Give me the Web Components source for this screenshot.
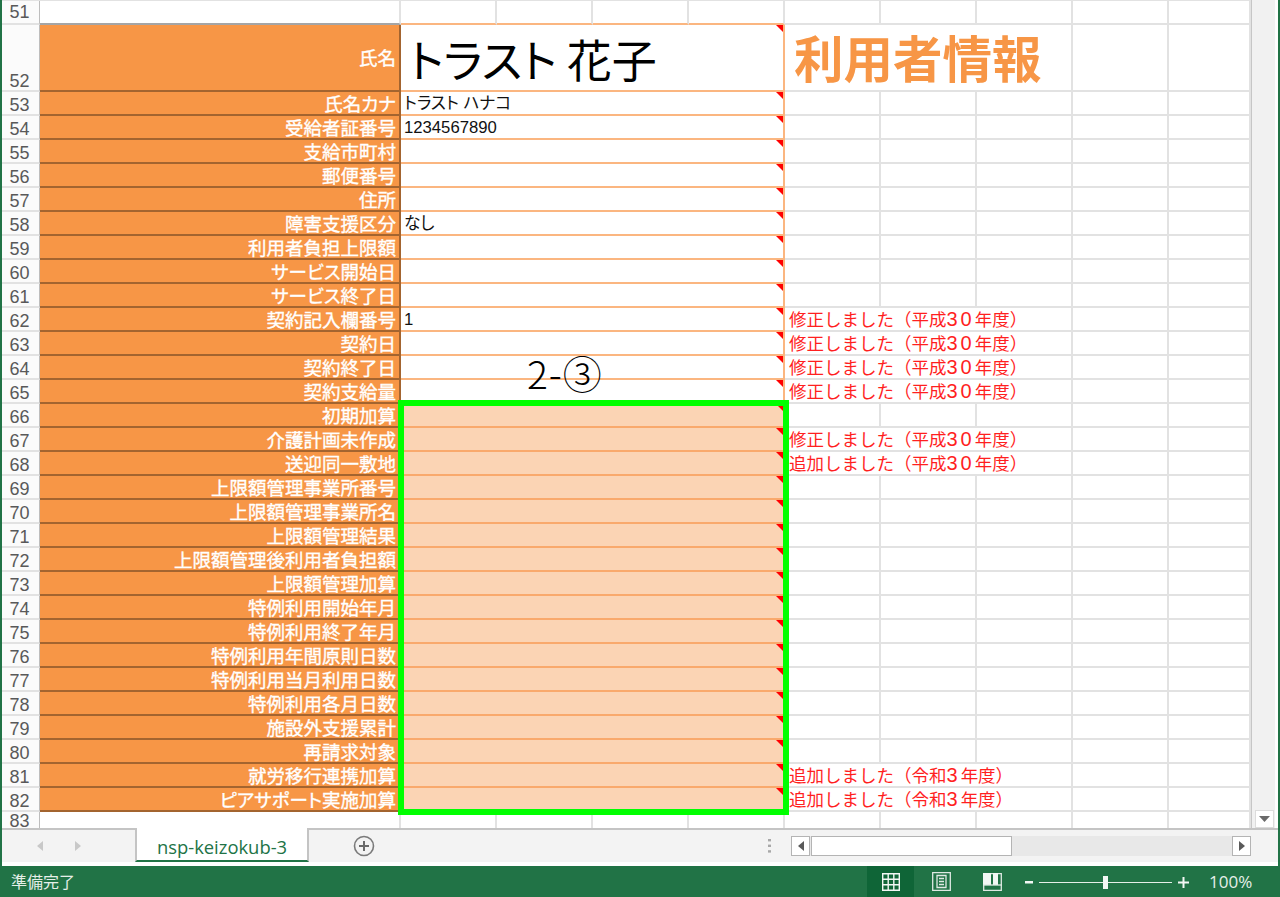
<!DOCTYPE html>
<html lang="ja">
<head>
<meta charset="utf-8">
<title>nsp-keizokub-3</title>
<style>
  html, body { margin: 0; padding: 0; height: 100%; overflow: hidden; background: #fff; }
</style>
</head>
<body>
<excel-window>
  <sheet-grid>
    <sheet-row num="51" kind="blank"></sheet-row>
    <sheet-row num="52" kind="head" label="氏名" title="利用者情報">トラスト 花子</sheet-row>
    <sheet-row num="53" label="氏名カナ">トラスト ハナコ</sheet-row>
    <sheet-row num="54" label="受給者証番号">1234567890</sheet-row>
    <sheet-row num="55" label="支給市町村"></sheet-row>
    <sheet-row num="56" label="郵便番号"></sheet-row>
    <sheet-row num="57" label="住所"></sheet-row>
    <sheet-row num="58" label="障害支援区分">なし</sheet-row>
    <sheet-row num="59" label="利用者負担上限額"></sheet-row>
    <sheet-row num="60" label="サービス開始日"></sheet-row>
    <sheet-row num="61" label="サービス終了日"></sheet-row>
    <sheet-row num="62" label="契約記入欄番号" note="修正しました（平成30年度）">1</sheet-row>
    <sheet-row num="63" label="契約日" note="修正しました（平成30年度）"></sheet-row>
    <sheet-row num="64" label="契約終了日" note="修正しました（平成30年度）"></sheet-row>
    <sheet-row num="65" label="契約支給量" note="修正しました（平成30年度）"></sheet-row>
    <sheet-row num="66" kind="fill" label="初期加算"></sheet-row>
    <sheet-row num="67" kind="fill" label="介護計画未作成" note="修正しました（平成30年度）"></sheet-row>
    <sheet-row num="68" kind="fill" label="送迎同一敷地" note="追加しました（平成30年度）"></sheet-row>
    <sheet-row num="69" kind="fill" label="上限額管理事業所番号"></sheet-row>
    <sheet-row num="70" kind="fill" label="上限額管理事業所名"></sheet-row>
    <sheet-row num="71" kind="fill" label="上限額管理結果"></sheet-row>
    <sheet-row num="72" kind="fill" label="上限額管理後利用者負担額"></sheet-row>
    <sheet-row num="73" kind="fill" label="上限額管理加算"></sheet-row>
    <sheet-row num="74" kind="fill" label="特例利用開始年月"></sheet-row>
    <sheet-row num="75" kind="fill" label="特例利用終了年月"></sheet-row>
    <sheet-row num="76" kind="fill" label="特例利用年間原則日数"></sheet-row>
    <sheet-row num="77" kind="fill" label="特例利用当月利用日数"></sheet-row>
    <sheet-row num="78" kind="fill" label="特例利用各月日数"></sheet-row>
    <sheet-row num="79" kind="fill" label="施設外支援累計"></sheet-row>
    <sheet-row num="80" kind="fill" label="再請求対象"></sheet-row>
    <sheet-row num="81" kind="fill" label="就労移行連携加算" note="追加しました（令和3年度）"></sheet-row>
    <sheet-row num="82" kind="fill" label="ピアサポート実施加算" note="追加しました（令和3年度）"></sheet-row>
    <sheet-row num="83" kind="blank"></sheet-row>
    <span slot="over">2-③</span>
  </sheet-grid>
  <sheet-tabs name="nsp-keizokub-3"></sheet-tabs>
  <status-bar text="準備完了" zoom="100%"></status-bar>
</excel-window>

<script>
/* ウィンドウ枠 */
class ExcelWindow extends HTMLElement {
  connectedCallback() {
    this.attachShadow({ mode: 'open' }).innerHTML = `
      <style>
        :host {
          display: flex;
          flex-direction: column;
          width: 1280px;
          height: 897px;
          box-sizing: border-box;
          border-left: 2px solid #217346;
          border-right: 2px solid #217346;
          background: #fff;
          overflow: hidden;
        }
      </style>
      <slot></slot>`;
  }
}

/* シート本体: 行 + 縦スクロールバー + 上に重なる枠 */
class SheetGrid extends HTMLElement {
  connectedCallback() {
    this.attachShadow({ mode: 'open' }).innerHTML = `
      <style>
        :host {
          display: flex;
          position: relative;
          height: 828px;
          flex: none;
          overflow: hidden;
        }
        .rows { width: 1249px; flex: none; border-top: 1px solid #e2e2e2; box-sizing: border-box; }
        .vbar {
          width: 24px;
          flex: none;
          background: #f1f1f1;
          border-left: 1px solid #c6c6c6;
          display: flex;
          flex-direction: column;
          justify-content: flex-end;
          box-sizing: border-box;
        }
        .vbar .down {
          height: 18px;
          margin: 0 0 0 3px;
          width: 19px;
          background: #fff;
          border: 1px solid #dcdcdc;
          box-sizing: border-box;
          display: flex;
          align-items: center;
          justify-content: center;
        }
        .mark {
          position: absolute;
          left: 396px;
          top: 400px;
          width: 391px;
          height: 415px;
          box-sizing: border-box;
          border: 6px solid #00ff00;
          pointer-events: none;
        }
        .step {
          position: absolute;
          left: 525px;
          top: 346px;
          font: 39px/52px "Noto Sans CJK JP", sans-serif;
          font-weight: 300;
          letter-spacing: 1px;
          color: #000;
          white-space: nowrap;
        }
      </style>
      <div class="rows"><slot></slot></div>
      <div class="vbar">
        <div class="down">
          <svg width="11" height="6" viewBox="0 0 11 6"><path d="M0 0h11L5.500 6z" fill="#6a6a6a"/></svg>
        </div>
      </div>
      <div class="mark"></div>
      <div class="step"><slot name="over"></slot></div>`;
  }
}

/* 1行分: 行番号 / 項目名 / 値 / 右側のメモ */
class SheetRow extends HTMLElement {
  connectedCallback() {
    const kind  = this.getAttribute('kind') || '';
    const num   = this.getAttribute('num');
    const label = this.getAttribute('label') || '';
    const note  = this.getAttribute('note');
    const title = this.getAttribute('title');
    this.removeAttribute('title');

    const blankCell = '<div class="cell"></div>';
    let right;
    if (title)     right = `<div class="cell spill title">${title}</div>${blankCell.repeat(2)}`;
    else if (note) right = `<div class="cell spill note">${note.replace(/\d+/, '<b>$&</b>')}</div>${blankCell.repeat(2)}`;
    else           right = blankCell.repeat(5);

    const body = kind === 'blank'
      ? `<div class="empty"></div><div class="split">${blankCell.repeat(4)}</div>`
      : `<div class="label">${label}</div><div class="value"><slot></slot><i></i></div>`;

    this.attachShadow({ mode: 'open' }).innerHTML = `
      <style>
        :host {
          display: grid;
          grid-template-columns: 38px 361px 384px 96px 96px 96px 96px 82px;
          grid-template-rows: 100%;
          height: 24px;
          box-sizing: border-box;
          font-family: "Liberation Sans", "Noto Sans CJK JP", sans-serif;
          font-feature-settings: "palt";
        }
        :host([kind="head"]) { height: 67px; }
        :host([num="83"]) { height: 17px; }

        .num {
          box-sizing: border-box;
          background: #fbfbfb;
          border-right: 1px solid #bdbdbd;
          border-bottom: 2px solid #e2e2e2;
          color: #595959;
          font-size: 18px;
          padding-right: 2px;
          display: flex;
          align-items: flex-end;
          justify-content: center;
        }
        .num span { line-height: 22px; position: relative; top: 2px; }
        :host([num="51"]) .num span { top: 0; }
        :host([num="83"]) .num { border-bottom: 0; align-items: flex-start; }
        :host([num="83"]) .num span { top: 1px; line-height: 17px; }
        .cell, .empty {
          box-sizing: border-box;
          border-right: 2px solid #e2e2e2;
          border-bottom: 2px solid #e2e2e2;
          min-width: 0;
        }
        .split { display: grid; grid-template-columns: repeat(4, 96px); }
        :host([num="51"]) .empty { border-bottom-color: #a5a5a5; }
        :host([num="51"]) .split .cell { border-bottom-color: #fbb680; }
        :host([num="83"]) .empty, :host([num="83"]) .cell { border-bottom: 0; }
        .label {
          box-sizing: border-box;
          background: #f79646;
          border-right: 2px solid #a3642f;
          border-bottom: 2px solid #a3642f;
          color: #fff;
          font: 18.5px/23px "Noto Sans CJK JP", sans-serif;
          font-feature-settings: "palt";
          -webkit-text-stroke: 0.35px #fff;
          text-align: right;
          padding-right: 3px;
          white-space: nowrap;
        }
        :host([kind="head"]) .label { line-height: 65px; }
        .value {
          position: relative;
          box-sizing: border-box;
          background: #fff;
          border-right: 2px solid #fbb680;
          border-bottom: 2px solid #fbb680;
          color: #111;
          font-size: 16.7px;
          line-height: 23px;
          padding-left: 3px;
          white-space: nowrap;
        }
        :host([kind="fill"]) .value {
          background: #fbd4b4;
          border-bottom-color: #f9a96c;
        }
        :host([kind="head"]) .value {
          color: #000;
          font-family: "Noto Sans CJK JP", sans-serif;
          font-size: 45px;
          line-height: 68px;
          padding-left: 8px;
        }
        .value i {
          position: absolute;
          top: 0;
          right: 0;
          width: 0;
          height: 0;
          border-top: 7px solid #ff0000;
          border-left: 7px solid transparent;
        }
        .spill {
          grid-column: span 3;
          white-space: nowrap;
        }
        .note {
          color: #ff1f1f;
          font: 17.5px/22px "Noto Sans CJK JP", sans-serif;
          padding-left: 4px;
        }
        .note b { font: 400 20px/22px "Liberation Sans", sans-serif; letter-spacing: 3px; }
        .title {
          color: #f79646;
          font: 700 49.5px/64px "Noto Sans CJK JP", sans-serif;
          padding-left: 9px;
        }
      </style>
      <div class="num"><span>${num}</span></div>
      ${body}
      ${right}`;
  }
}

/* シート見出しと横スクロールバー */
class SheetTabs extends HTMLElement {
  connectedCallback() {
    const name = this.getAttribute('name');
    this.attachShadow({ mode: 'open' }).innerHTML = `
      <style>
        :host {
          display: flex;
          align-items: stretch;
          height: 38px;
          flex: none;
          box-sizing: border-box;
          background: #f3f3f3;
          border-top: 2px solid #c4c4c4;
          border-bottom: 4px solid #fff;
        }
        .nav {
          width: 133px;
          flex: none;
          display: flex;
          align-items: center;
          gap: 32px;
          padding-left: 35px;
          box-sizing: border-box;
        }
        .tab {
          width: 174px;
          flex: none;
          box-sizing: border-box;
          margin-top: -2px;
          background: #fff;
          border-left: 2px solid #c4c4c4;
          border-right: 2px solid #c4c4c4;
          border-bottom: 2px solid #217346;
          color: #217346;
          font: 18.4px/37px "Open Sans", "Liberation Sans", sans-serif;
          text-align: center;
          white-space: nowrap;
        }
        .add {
          width: 110px;
          flex: none;
          display: flex;
          align-items: center;
          justify-content: center;
        }
        .grip {
          margin-left: 339px;
          width: 22px;
          flex: none;
          display: flex;
          align-items: center;
          justify-content: center;
        }
        .hbar {
          width: 460px;
          flex: none;
          height: 20px;
          align-self: center;
          margin-left: 11px;
          display: flex;
          background: #e8e8e8;
          box-sizing: border-box;
        }
        .btn {
          width: 19px;
          flex: none;
          box-sizing: border-box;
          background: #fff;
          border: 1px solid #b4b4b4;
          display: flex;
          align-items: center;
          justify-content: center;
        }
        .thumb {
          width: 201px;
          flex: none;
          margin-left: 1px;
          box-sizing: border-box;
          background: #fff;
          border: 1px solid #b4b4b4;
        }
        .gap { flex: 1; }
      </style>
      <div class="nav">
        <svg width="6" height="10" viewBox="0 0 6 10"><path d="M6 0v10L0 5z" fill="#c8c8c8"/></svg>
        <svg width="6" height="10" viewBox="0 0 6 10"><path d="M0 0v10l6-5z" fill="#c8c8c8"/></svg>
      </div>
      <div class="tab">${name}</div>
      <div class="add">
        <svg width="22" height="22" viewBox="0 0 22 22">
          <circle cx="11" cy="11" r="9.500" fill="none" stroke="#7a7a7a" stroke-width="1.600"/>
          <path d="M6 11h10M11 6v10" stroke="#6a6a6a" stroke-width="2"/>
        </svg>
      </div>
      <div class="grip">
        <svg width="3" height="14" viewBox="0 0 3 14" fill="#a8a8a8">
          <rect y="0" width="3" height="2.400"/><rect y="5.600" width="3" height="2.400"/><rect y="11.200" width="3" height="2.400"/>
        </svg>
      </div>
      <div class="hbar">
        <div class="btn"><svg width="6" height="10" viewBox="0 0 6 10"><path d="M6 0v10L0 5z" fill="#5a5a5a"/></svg></div>
        <div class="thumb"></div>
        <div class="gap"></div>
        <div class="btn"><svg width="6" height="10" viewBox="0 0 6 10"><path d="M0 0v10l6-5z" fill="#5a5a5a"/></svg></div>
      </div>`;
  }
}

/* ステータスバー */
class StatusBar extends HTMLElement {
  connectedCallback() {
    this.attachShadow({ mode: 'open' }).innerHTML = `
      <style>
        :host {
          display: flex;
          align-items: stretch;
          height: 31px;
          flex: none;
          margin: 0 -2px;
          background: #217346;
          color: #e6efe9;
        }
        .text {
          font: 16px/31px "Noto Sans CJK JP", sans-serif;
          padding-left: 11px;
          width: 867px;
          flex: none;
          box-sizing: border-box;
        }
        .view {
          width: 51px;
          flex: none;
          display: flex;
          align-items: center;
          justify-content: center;
        }
        .view.on { background: #0f6537; width: 47px; margin-right: 2px; }
        .zoom {
          display: flex;
          align-items: center;
          margin-left: 7px;
        }
        .pct {
          font: 17px/31px "Open Sans", "Liberation Sans", sans-serif;
          margin-left: 14px;
          white-space: nowrap;
        }
      </style>
      <div class="text">${this.getAttribute('text')}</div>
      <div class="view on">
        <svg width="18" height="18" viewBox="0 0 18 18" fill="none" stroke="#f2f7f4" stroke-width="1.400">
          <path d="M.7.7h16.600v16.600H.7zM6.200.7v16.600M11.800.7v16.600M.7 6.200h16.600M.7 11.800h16.600"/>
        </svg>
      </div>
      <div class="view">
        <svg width="19" height="19" viewBox="0 0 19 19" fill="none" stroke="#dfe9e3" stroke-width="1.300">
          <path d="M.7.7h17.600v17.600H.7z"/>
          <path d="M5 3.500h9v12H5zM7 6.500h5M7 9.500h5M7 12.500h5"/>
        </svg>
      </div>
      <div class="view">
        <svg width="19" height="18" viewBox="0 0 19 18">
          <path d="M.7.7h17.600v16.600H.7z" fill="none" stroke="#dfe9e3" stroke-width="1.300"/>
          <path d="M0 0h8v12H0zM10 0h5v12h-5z" fill="#f2f7f4"/>
          <path d="M0 12h19" stroke="#dfe9e3" stroke-width="1.300"/>
        </svg>
      </div>
      <div class="zoom">
        <svg width="170" height="14" viewBox="0 0 170 14">
          <path d="M14 7.500h133" stroke="#e6efe9"/>
          <rect x="0" y="6" width="8" height="2.500" fill="#f2f7f4"/>
          <rect x="78" y="1" width="5" height="13" fill="#f2f7f4"/>
          <path d="M153 7.500h11M158.500 2v11" stroke="#f2f7f4" stroke-width="2"/>
        </svg>
      </div>
      <div class="pct">${this.getAttribute('zoom')}</div>`;
  }
}

customElements.define('excel-window', ExcelWindow);
customElements.define('sheet-grid', SheetGrid);
customElements.define('sheet-row', SheetRow);
customElements.define('sheet-tabs', SheetTabs);
customElements.define('status-bar', StatusBar);
</script>
</body>
</html>
